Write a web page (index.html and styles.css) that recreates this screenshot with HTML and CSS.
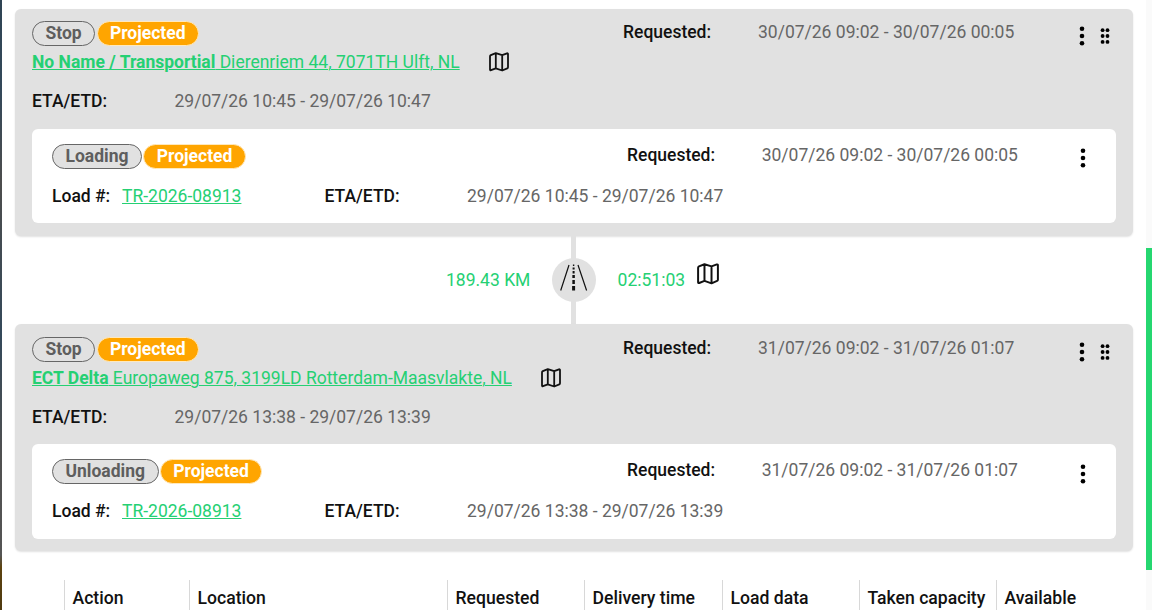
FILE: index.html
```
<!DOCTYPE html>
<html lang="en">
<head>
    <meta charset="UTF-8">
    <meta name="viewport" content="width=device-width, initial-scale=1.0">
    <title>Trip planning</title>
    <link rel="stylesheet" href="styles.css">
</head>
<body>
    <svg class="defs">
        <symbol id="map" viewBox="0 0 20 20">
            <path d="M1 4.4 Q1 3.5 1.8 3.1 L6.8 1.1 L13.2 3.1 L18 1.3 Q19 1.1 19 2 V15.2 Q19 16 18.3 16.3 L13.2 18.5 L6.8 16.3 L2 18.2 Q1 18.5 1 17.5 Z M6.8 1.1 V16.3 M13.2 3.1 V18.5"/>
        </symbol>
        <symbol id="more" viewBox="0 0 6 20">
            <circle cx="3" cy="2.7" r="2.3"/><circle cx="3" cy="10" r="2.3"/><circle cx="3" cy="17.3" r="2.3"/>
        </symbol>
        <symbol id="drag" viewBox="0 0 10 16">
            <circle cx="2.6" cy="2.2" r="1.9"/><circle cx="7.5" cy="2.2" r="1.9"/>
            <circle cx="2.6" cy="8" r="1.9"/><circle cx="7.5" cy="8" r="1.9"/>
            <circle cx="2.6" cy="13.9" r="1.9"/><circle cx="7.5" cy="13.9" r="1.9"/>
        </symbol>
    </svg>
    <div class="backdrop"></div>
    <main class="panel">
        <section class="stop">
            <div class="stop-head">
                <div class="tags"><span class="tag">Stop</span><span class="tag projected">Projected</span></div>
                <b class="label">Requested:</b>
                <span class="date">30/07/26 09:02 - 30/07/26 00:05</span>
                <div class="actions">
                    <svg class="more"><use href="#more"/></svg>
                    <svg class="drag"><use href="#drag"/></svg>
                </div>
            </div>
            <div class="address">
                <a href="#"><b>No Name / Transportial</b> Dierenriem 44, 7071TH Ulft, NL</a>
                <svg class="map"><use href="#map"/></svg>
            </div>
            <div class="eta">
                <b class="label">ETA/ETD:</b>
                <span class="date">29/07/26 10:45 - 29/07/26 10:47</span>
            </div>
            <div class="card">
                <div class="card-head">
                    <div class="tags"><span class="tag">Loading</span><span class="tag projected">Projected</span></div>
                    <b class="label">Requested:</b>
                    <span class="date">30/07/26 09:02 - 30/07/26 00:05</span>
                    <svg class="more"><use href="#more"/></svg>
                </div>
                <div class="card-row">
                    <b class="label">Load #:</b>
                    <a href="#">TR-2026-08913</a>
                    <b class="label">ETA/ETD:</b>
                    <span class="date">29/07/26 10:45 - 29/07/26 10:47</span>
                </div>
            </div>
        </section>

        <div class="route">
            <span class="distance">189.43 KM</span>
            <div class="road">
                <svg viewBox="0 0 44 44">
                    <path d="M17 7 L8.7 32.5 M26 7 L34.6 32.5" stroke-width="1.2"/>
                    <path d="M21.6 6.5 V8" stroke-width="1.4"/>
                    <path d="M21.6 9.5 V11.5 M21.6 13 V15.5" stroke-width="2"/>
                    <path d="M21.6 17 V20 M21.6 22 V26" stroke-width="2.5"/>
                    <path d="M21.6 28 V32.5" stroke-width="3"/>
                </svg>
            </div>
            <span class="duration">02:51:03</span>
            <svg class="map"><use href="#map"/></svg>
        </div>

        <section class="stop second">
            <div class="stop-head">
                <div class="tags"><span class="tag">Stop</span><span class="tag projected">Projected</span></div>
                <b class="label">Requested:</b>
                <span class="date">31/07/26 09:02 - 31/07/26 01:07</span>
                <div class="actions">
                    <svg class="more"><use href="#more"/></svg>
                    <svg class="drag"><use href="#drag"/></svg>
                </div>
            </div>
            <div class="address">
                <a href="#"><b>ECT Delta</b> Europaweg 875, 3199LD Rotterdam-Maasvlakte, NL</a>
                <svg class="map"><use href="#map"/></svg>
            </div>
            <div class="eta">
                <b class="label">ETA/ETD:</b>
                <span class="date">29/07/26 13:38 - 29/07/26 13:39</span>
            </div>
            <div class="card">
                <div class="card-head">
                    <div class="tags"><span class="tag">Unloading</span><span class="tag projected">Projected</span></div>
                    <b class="label">Requested:</b>
                    <span class="date">31/07/26 09:02 - 31/07/26 01:07</span>
                    <svg class="more"><use href="#more"/></svg>
                </div>
                <div class="card-row">
                    <b class="label">Load #:</b>
                    <a href="#">TR-2026-08913</a>
                    <b class="label">ETA/ETD:</b>
                    <span class="date">29/07/26 13:38 - 29/07/26 13:39</span>
                </div>
            </div>
        </section>

        <div class="table-head">
            <span>Action</span>
            <span>Location</span>
            <span>Requested</span>
            <span>Delivery time</span>
            <span>Load data</span>
            <span>Taken capacity</span>
            <span>Available</span>
        </div>
    </main>
    <div class="scrollbar"><div class="thumb"></div></div>
</body>
</html>
```
FILE: styles.css
```
* {
    margin: 0;
    padding: 0;
    box-sizing: border-box;
}
body {
    display: flex;
    width: 1152px;
    height: 610px;
    overflow: hidden;
    background-color: white;
    font-family: Roboto, "Liberation Sans", sans-serif;
    font-size: 17.5px;
    line-height: 22px;
    color: #111;
}
svg {
    display: block;
}
.defs {
    display: none;
}
a {
    color: #25d073;
    text-underline-offset: 1px;
    text-decoration-thickness: 1px;
}
.backdrop {
    width: 2px;
    background: linear-gradient(#2f4454, #34495a 15%, #4d4d4d 30%, #34495a 55%, #505050 75%, #555 91%, #5d4310 93%, #4f3a10);
}
.panel {
    width: 1144px;
    padding: 9px 13px 0;
}
.stop {
    width: 1118px;
    height: 227px;
    padding: 12px 17px 0;
    background-color: #e1e1e1;
    border-radius: 6px;
    box-shadow: 0 1px 2px rgba(0, 0, 0, 0.12);
}
.stop-head {
    display: grid;
    grid-template-columns: 591px 135px 318px 1fr;
    height: 25px;
}
.tags {
    display: flex;
    gap: 1.4px;
}
.tag {
    height: 25px;
    padding: 0 12.5px;
    border: 1px solid #666;
    border-radius: 13px;
    background-color: #e1e1e1;
    color: #5e5e5e;
    font-weight: 700;
    line-height: 22px;
}
.projected {
    padding: 0 12.3px;
    border-color: #ffe9bd;
    background-color: #ffa500;
    color: white;
}
.label {
    font-weight: 500;
}
.date {
    color: #666;
}
.actions {
    display: flex;
    gap: 15px;
    padding-top: 5px;
    padding-left: 3.3px;
}
.more {
    width: 6px;
    height: 20px;
}
.drag {
    width: 10px;
    height: 16px;
    margin-top: 2px;
}
.map {
    width: 20px;
    height: 20px;
    fill: none;
    stroke: #111;
    stroke-width: 1.8;
    stroke-linejoin: round;
}
.address {
    display: flex;
    align-items: center;
    gap: 29.6px;
    height: 22px;
    margin-top: 5px;
}
.eta {
    display: grid;
    grid-template-columns: 142.5px 1fr;
    margin-top: 17px;
}
.card {
    height: 94px;
    margin-top: 17px;
    padding: 15px 20px 0;
    background-color: white;
    border-radius: 6px;
}
.card-head {
    display: grid;
    grid-template-columns: 575px 134.7px 318.6px 1fr;
    height: 25px;
}
.card-head .more {
    margin-top: 4px;
}
.card-row {
    display: grid;
    grid-template-columns: 70px 202.5px 142.5px 1fr;
    margin-top: 16px;
}
.second {
    padding-top: 13px;
}
.second .card {
    margin-top: 16px;
    height: 95px;
}
.second .card-head .more {
    margin-top: 5px;
}
.route {
    display: grid;
    grid-template-columns: 431px 106px 44px 21.6px 79px 1fr;
    height: 88px;
    align-items: center;
    color: #25d073;
    background: linear-gradient(#e1e1e1, #e1e1e1) 556px 0 / 5px 100% no-repeat;
}
.distance {
    grid-column: 2;
}
.road {
    width: 44px;
    height: 44px;
    border-radius: 50%;
    background-color: #e1e1e1;
}
.road svg {
    width: 44px;
    height: 44px;
    stroke: #111;
    fill: none;
}
.duration {
    grid-column: 5;
}
.route .map {
    width: 22px;
    height: 22px;
    margin-bottom: 12px;
}
.table-head {
    display: grid;
    grid-template-columns: 125px 258px 137px 138px 137px 137px 1fr;
    height: 40px;
    margin-top: 29px;
    padding-left: 49px;
    font-size: 17.6px;
    font-weight: 500;
}
.table-head span {
    padding: 7px 0 0 7.5px;
    border-left: 1px solid #d8d8d8;
    white-space: nowrap;
}
.scrollbar {
    width: 6px;
    padding-top: 248px;
    background-color: #fafafa;
}
.thumb {
    height: 322px;
    background-color: #25d770;
}
```
